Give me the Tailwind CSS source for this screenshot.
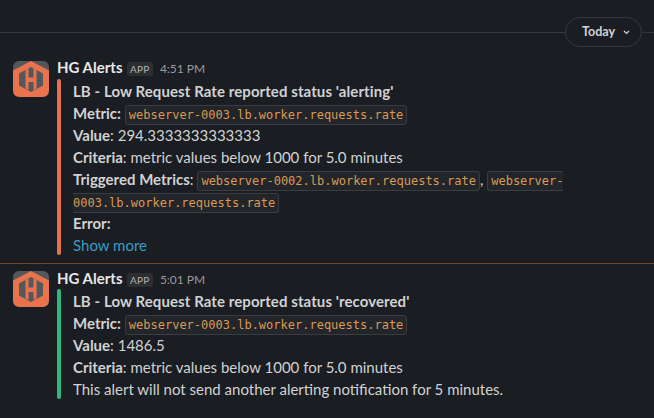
<!DOCTYPE html>
<html lang="en">
  <head>
    <meta charset="UTF-8" />
    <title>HG Alerts</title>
    <script src="https://cdn.jsdelivr.net/npm/@tailwindcss/browser@4"></script>
  </head>
  <body class="bg-[#1a1d21] w-[654px] h-[418px] overflow-hidden font-['Lato',sans-serif] text-[15px] text-[#d1d2d3]">
    <!-- date divider -->
    <div class="relative h-[59px]">
      <div class="absolute top-[32px] left-0 right-0 h-px bg-[#35373b]"></div>
      <div class="absolute top-[17px] left-[565px] w-[77px] h-[30px] rounded-full border border-[#35373b] bg-[#1a1d21] flex items-center pl-[16px] gap-[8px] text-[12.5px] font-bold text-[#d1d2d3]">
        Today
        <svg width="7" height="5" viewBox="0 0 7 5" fill="none" stroke="#d1d2d3" stroke-width="1.2"><path d="M1 1l2.5 2.5L6 1" /></svg>
      </div>
    </div>

    <!-- first alert -->
    <div class="flex pl-[13px] h-[204px]">
      <svg class="w-[36px] h-[36px] shrink-0 mt-[2px]" viewBox="0 0 36 36">
        <rect width="36" height="36" rx="6" fill="#55575b" />
        <path d="M18 0L36 9.5V29Q36 36 29 36H7Q0 36 0 29V9.5Z" fill="#e9734c" />
        <path d="M18 6L30 12.5V24.5L18 31L6 24.5V12.5Z" fill="#55575b" />
        <path d="M12.5 9L15.5 7.5V16.5H20.5V7.5L23.5 9V27.5L20.5 29V21H15.5V29L12.5 27.5Z" fill="#e9734c" />
      </svg>
      <div class="ml-[8px] min-w-0">
        <div class="flex items-baseline h-[23px] mt-[-3px]">
          <span class="font-bold text-[15px] text-[#e8e8e8]">HG Alerts</span>
          <span class="ml-[4px] px-[3.5px] h-[14px] leading-[14px] rounded-[2px] bg-[#2c2e32] text-[10px] tracking-[0.2px] text-[#b0b1b3]">APP</span>
          <span class="ml-[7px] text-[12px] text-[#9a9b9d]">4:51 PM</span>
        </div>
        <div class="flex h-[176px]">
          <div class="w-[4px] rounded-full bg-[#e2734d] shrink-0"></div>
          <div class="pl-[12px] w-[505px] leading-[22px]">
            <div class="font-bold h-[23px] pt-px tracking-[0.08px]">LB - Low Request Rate reported status 'alerting'</div>
            <div class="h-[22px]"><span class="font-bold">Metric:</span> <code class="font-['DejaVu_Sans_Mono',monospace] text-[12px] leading-none text-[#d99a55] bg-[#222529] border border-[#3a3c40] rounded-[3px] px-[3px] py-[2px]">webserver-0003.lb.worker.requests.rate</code></div>
            <div class="h-[22px]"><span class="font-bold">Value</span>: 294.3333333333333</div>
            <div class="h-[22px]"><span class="font-bold">Criteria</span>: metric values below 1000 for 5.0 minutes</div>
            <div class="h-[44px]"><span class="font-bold">Triggered Metrics</span>: <code class="font-['DejaVu_Sans_Mono',monospace] text-[12px] leading-none text-[#d99a55] bg-[#222529] border border-[#3a3c40] rounded-[3px] px-[3px] py-[2px]">webserver-0002.lb.worker.requests.rate</code>, <code class="font-['DejaVu_Sans_Mono',monospace] text-[12px] leading-none text-[#d99a55] bg-[#222529] border border-[#3a3c40] rounded-[3px] px-[3px] py-[2px]">webserver-<br />0003.lb.worker.requests.rate</code></div>
            <div class="font-bold h-[22px]">Error:</div>
            <div class="h-[21px] text-[#3a9cc4]">Show more</div>
          </div>
        </div>
      </div>
    </div>

    <div class="h-px bg-[#7a4235]"></div>

    <!-- second alert -->
    <div class="flex pl-[13px] pt-[6px]">
      <svg class="w-[36px] h-[36px] shrink-0 mt-[1px]" viewBox="0 0 36 36">
        <rect width="36" height="36" rx="6" fill="#55575b" />
        <path d="M18 0L36 9.5V29Q36 36 29 36H7Q0 36 0 29V9.5Z" fill="#e9734c" />
        <path d="M18 6L30 12.5V24.5L18 31L6 24.5V12.5Z" fill="#55575b" />
        <path d="M12.5 9L15.5 7.5V16.5H20.5V7.5L23.5 9V27.5L20.5 29V21H15.5V29L12.5 27.5Z" fill="#e9734c" />
      </svg>
      <div class="ml-[8px] min-w-0">
        <div class="flex items-baseline h-[22px] mt-[-3px]">
          <span class="font-bold text-[15px] text-[#e8e8e8]">HG Alerts</span>
          <span class="ml-[4px] px-[3.5px] h-[14px] leading-[14px] rounded-[2px] bg-[#2c2e32] text-[10px] tracking-[0.2px] text-[#b0b1b3]">APP</span>
          <span class="ml-[7px] text-[12px] text-[#9a9b9d]">5:01 PM</span>
        </div>
        <div class="flex h-[110px]">
          <div class="w-[4px] rounded-full bg-[#2eb67d] shrink-0"></div>
          <div class="pl-[12px] leading-[22px]">
            <div class="font-bold h-[23px] pt-px tracking-[0.08px]">LB - Low Request Rate reported status 'recovered'</div>
            <div class="h-[22px]"><span class="font-bold">Metric:</span> <code class="font-['DejaVu_Sans_Mono',monospace] text-[12px] leading-none text-[#d99a55] bg-[#222529] border border-[#3a3c40] rounded-[3px] px-[3px] py-[2px]">webserver-0003.lb.worker.requests.rate</code></div>
            <div class="h-[22px]"><span class="font-bold">Value</span>: 1486.5</div>
            <div class="h-[22px]"><span class="font-bold">Criteria</span>: metric values below 1000 for 5.0 minutes</div>
            <div class="h-[21px]">This alert will not send another alerting notification for 5 minutes.</div>
          </div>
        </div>
      </div>
    </div>
  </body>
</html>
